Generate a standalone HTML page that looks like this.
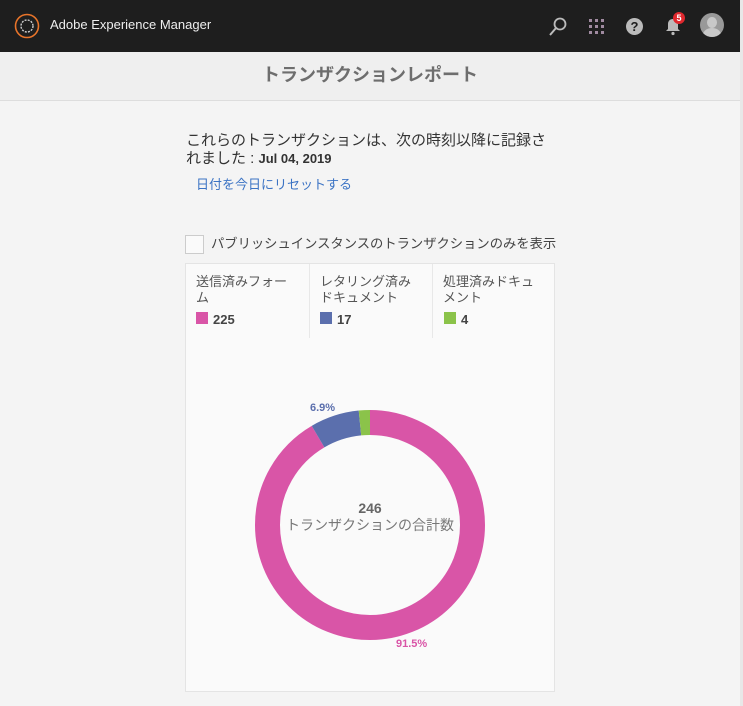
<!DOCTYPE html>
<html><head><meta charset="utf-8"><style>
body{margin:0;width:743px;height:706px;background:#f4f4f4;font-family:"Liberation Sans","Noto Sans CJK JP",sans-serif;overflow:hidden;position:relative;color:#333}
.top{position:absolute;left:0;top:0;width:740px;height:52px;background:#1e1e1e}
.sb{position:absolute;right:0;top:0;width:3px;height:706px;background:#e8e8e8}
.hdr{position:absolute;left:0;top:52px;width:740px;height:48px;background:#efefef;border-bottom:1px solid #ddd;text-align:center;line-height:46px;font-size:18px;font-weight:bold;color:#6e6e6e}
.t{position:absolute;white-space:nowrap}
</style></head><body>
<div class="top"></div><div class="sb"></div>
<svg style="position:absolute;left:14px;top:13px" width="26" height="26"><circle cx="13" cy="13" r="11.5" fill="none" stroke="#e8742a" stroke-width="1.6"/><circle cx="13" cy="13" r="6" fill="none" stroke="#ccc" stroke-width="1.4" stroke-dasharray="2 1.2"/></svg>
<div class="t" style="left:50px;top:17px;color:#eee;font-size:13px">Adobe Experience Manager</div>
<svg style="position:absolute;left:548px;top:16px" width="20" height="20"><circle cx="12" cy="8" r="5.5" fill="none" stroke="#bbb" stroke-width="1.8"/><line x1="8" y1="12" x2="2" y2="19" stroke="#bbb" stroke-width="2"/></svg>
<svg style="position:absolute;left:588px;top:18px" width="18" height="18" fill="#a08aa0"><rect x="1" y="1" width="3" height="3"/><rect x="7" y="1" width="3" height="3"/><rect x="13" y="1" width="3" height="3"/><rect x="1" y="7" width="3" height="3"/><rect x="7" y="7" width="3" height="3"/><rect x="13" y="7" width="3" height="3"/><rect x="1" y="13" width="3" height="3"/><rect x="7" y="13" width="3" height="3"/><rect x="13" y="13" width="3" height="3"/></svg>
<div class="t" style="left:626px;top:18px;width:17px;height:17px;border-radius:50%;background:#bbb;color:#1e1e1e;font-size:13px;font-weight:bold;text-align:center;line-height:17px">?</div>
<svg style="position:absolute;left:665px;top:17px" width="16" height="19"><path d="M8 2c-3 0-5 2-5 5v5l-2 2h14l-2-2V7c0-3-2-5-5-5z" fill="#bbb"/><circle cx="8" cy="16.5" r="1.6" fill="#bbb"/></svg>
<div class="t" style="left:673px;top:12px;width:12px;height:12px;border-radius:50%;background:#e0282e;color:#fff;font-size:9px;font-weight:bold;text-align:center;line-height:12px">5</div>
<div class="t" style="left:700px;top:13px;width:24px;height:24px;border-radius:50%;background:#999;overflow:hidden"><div style="position:absolute;left:7px;top:4px;width:10px;height:11px;border-radius:50%;background:#c8c8c8"></div><div style="position:absolute;left:3px;top:15px;width:18px;height:14px;border-radius:50%;background:#c8c8c8"></div></div>
<div class="hdr">トランザクションレポート</div>
<div class="t" style="left:186px;top:132px;font-size:15px;line-height:18px;color:#333">これらのトランザクションは、次の時刻以降に記録さ<br>れました : <b style="font-size:13px">Jul 04, 2019</b></div>
<div class="t" style="left:196px;top:174px;font-size:13px;color:#3b73c4">日付を今日にリセットする</div>
<div class="t" style="left:185px;top:235px;width:17px;height:17px;border:1px solid #ccc;background:#fafafa"></div>
<div class="t" style="left:211px;top:233px;font-size:13.3px;color:#444">パブリッシュインスタンスのトランザクションのみを表示</div>
<div class="t" style="left:185px;top:263px;width:368px;height:427px;background:#fafafa;border:1px solid #e4e4e4"></div>
<div class="t" style="left:309px;top:264px;width:1px;height:74px;background:#e8e8e8"></div>
<div class="t" style="left:432px;top:264px;width:1px;height:74px;background:#e8e8e8"></div>
<div class="t" style="left:196px;top:274px;font-size:13px;line-height:16px;color:#555">送信済みフォー<br>ム</div>
<div class="t" style="left:320px;top:274px;font-size:13px;line-height:16px;color:#555">レタリング済み<br>ドキュメント</div>
<div class="t" style="left:443px;top:274px;font-size:13px;line-height:16px;color:#555">処理済みドキュ<br>メント</div>
<div class="t" style="left:196px;top:312px;width:12px;height:12px;background:#d955a7"></div><div class="t" style="left:213px;top:312px;font-size:13px;font-weight:bold;color:#444">225</div>
<div class="t" style="left:320px;top:312px;width:12px;height:12px;background:#5b6fad"></div><div class="t" style="left:337px;top:312px;font-size:13px;font-weight:bold;color:#444">17</div>
<div class="t" style="left:444px;top:312px;width:12px;height:12px;background:#8bc34a"></div><div class="t" style="left:461px;top:312px;font-size:13px;font-weight:bold;color:#444">4</div>
<svg style="position:absolute;left:255px;top:410px" width="230" height="230"><g transform="rotate(-90 115 115)" fill="none" stroke-width="25">
<circle cx="115" cy="115" r="102.5" stroke="#d955a7" stroke-dasharray="589.3 700"/>
<circle cx="115" cy="115" r="102.5" stroke="#5b6fad" stroke-dasharray="0 589.3 44.4 700"/>
<circle cx="115" cy="115" r="102.5" stroke="#8bc34a" stroke-dasharray="0 633.7 10.3 700"/></g></svg>
<div class="t" style="left:310px;top:402px;font-size:11px;font-weight:bold;color:#5b6fad">6.9%</div>
<div class="t" style="left:396px;top:638px;font-size:11px;font-weight:bold;color:#d955a7">91.5%</div>
<div class="t" style="left:270px;top:500px;width:200px;text-align:center;font-size:14px;font-weight:bold;color:#666">246</div>
<div class="t" style="left:270px;top:515px;width:200px;text-align:center;font-size:14px;color:#777">トランザクションの合計数</div>
</body></html>
